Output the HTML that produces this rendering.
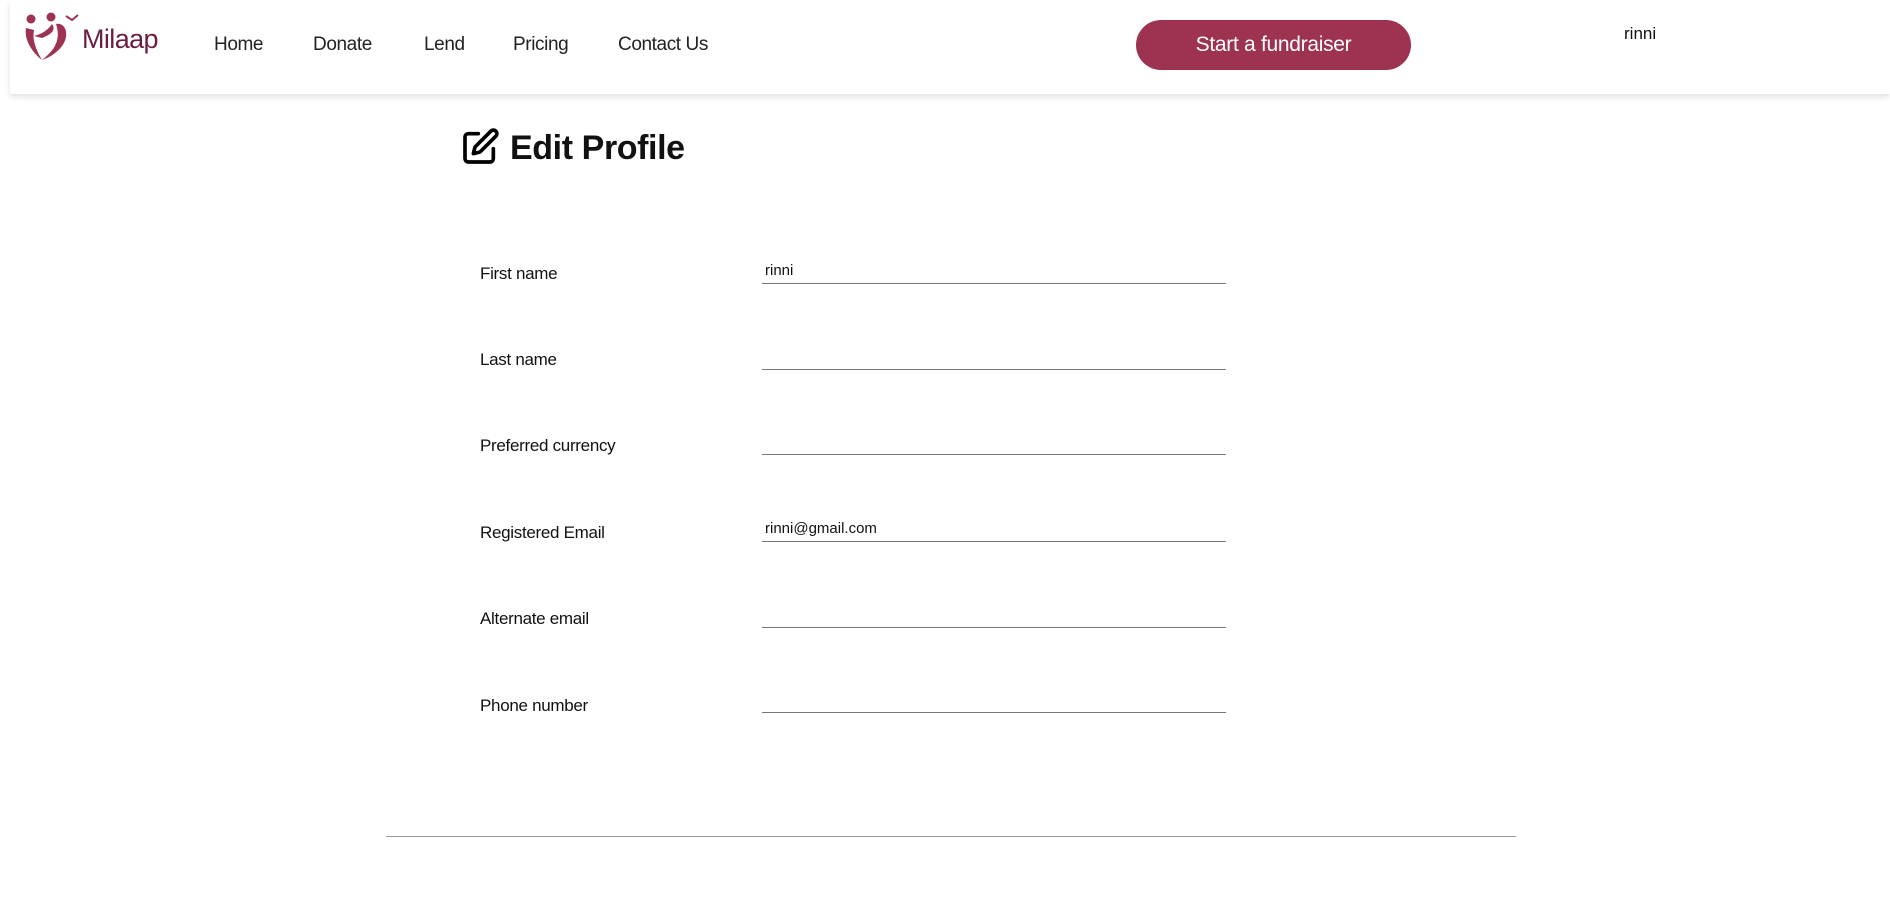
<!DOCTYPE html>
<html><head><meta charset="utf-8"><style>
*{box-sizing:border-box;margin:0;padding:0}
body{width:1890px;height:903px;background:#fff;font-family:"Liberation Sans",sans-serif;color:#111;position:relative;overflow:hidden}
.hdr{position:absolute;left:10px;top:0;width:1880px;height:94px;background:#fff;box-shadow:0 3px 6px rgba(0,0,0,.12)}
.nav a{position:absolute;top:34px;font-size:19px;color:#222;text-decoration:none;letter-spacing:-.4px}
.btn{position:absolute;left:1136px;top:20px;width:275px;height:50px;border-radius:25px;background:#9d3350;color:#fff;font-size:21px;text-align:center;line-height:50px;letter-spacing:-.3px}
.user{position:absolute;left:1624px;top:24px;font-size:17px;color:#111}
h1{position:absolute;left:510px;top:129px;font-size:34px;font-weight:bold;letter-spacing:-.4px}
.lbl{position:absolute;left:480px;font-size:17px;color:#111;letter-spacing:-.3px}
.inp{position:absolute;left:762px;width:464px;height:26px;border-bottom:1.5px solid #777;font-size:15px;padding-left:3px;line-height:26px}
.hr{position:absolute;left:386px;top:836px;width:1130px;height:1px;background:#999}
</style></head><body>
<div class="hdr"></div>
<svg style="position:absolute;left:22px;top:10px" width="60" height="52" viewBox="0 0 60 52">
<circle cx="9" cy="9" r="4.5" fill="#9d3350"/><circle cx="29" cy="7" r="4.5" fill="#9d3350"/>
<path d="M4 18 C2 30 10 42 20 50 C14 40 10 30 12 20 Z" fill="#9d3350"/>
<path d="M12 26 C20 24 26 20 30 14 C34 20 30 24 20 28 Z" fill="#9d3350"/>
<path d="M34 14 C44 12 48 26 40 36 C34 44 26 48 20 50 C30 42 40 32 34 14 Z" fill="#9d3350"/>
<path d="M44 6 L50 10 L56 5" stroke="#9d3350" stroke-width="2" fill="none"/>
</svg>
<div style="position:absolute;left:82px;top:24px;font-size:27px;color:#6b1e44;letter-spacing:-.6px">Milaap</div>
<div class="nav"><a style="left:214px">Home</a><a style="left:313px">Donate</a><a style="left:424px">Lend</a><a style="left:513px">Pricing</a><a style="left:618px">Contact Us</a></div>
<div class="btn">Start a fundraiser</div>
<div class="user">rinni</div>
<svg style="position:absolute;left:460px;top:127px" width="40" height="40" viewBox="0 0 24 24" fill="none" stroke="#000" stroke-width="2.2" stroke-linecap="round" stroke-linejoin="round"><path d="M11 4H5a2 2 0 0 0-2 2v13a2 2 0 0 0 2 2h13a2 2 0 0 0 2-2v-6"/><path d="M18.5 2.5a2.1 2.1 0 0 1 3 3L12 15l-4 1 1-4z"/></svg>
<h1>Edit Profile</h1>
<div class="lbl" style="top:264px">First name</div><div class="inp" style="top:258px">rinni</div>
<div class="lbl" style="top:350px">Last name</div><div class="inp" style="top:344px"></div>
<div class="lbl" style="top:436px">Preferred currency</div><div class="inp" style="top:429px"></div>
<div class="lbl" style="top:523px">Registered Email</div><div class="inp" style="top:516px">rinni@gmail.com</div>
<div class="lbl" style="top:609px">Alternate email</div><div class="inp" style="top:602px"></div>
<div class="lbl" style="top:696px">Phone number</div><div class="inp" style="top:687px"></div>
<div class="hr"></div>
</body></html>
